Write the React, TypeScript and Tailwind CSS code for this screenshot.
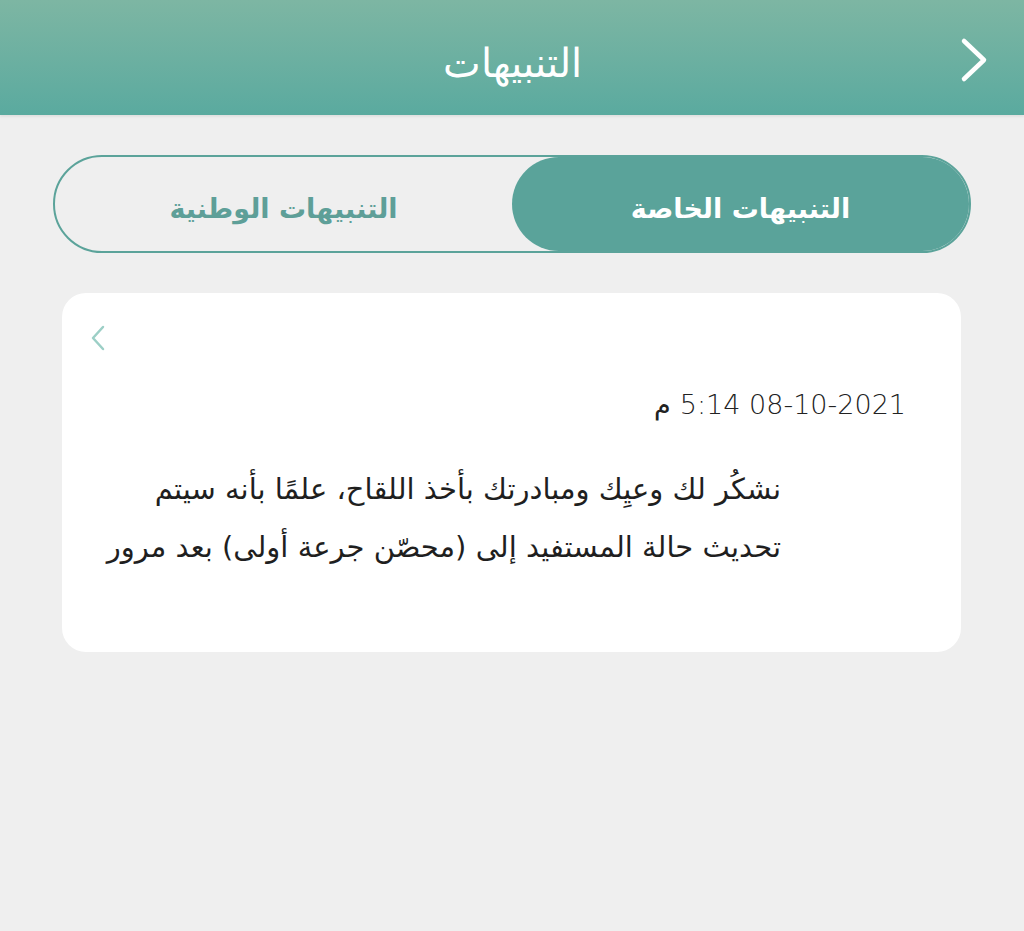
import React from 'react';

const arabicFont = { fontFamily: '"DejaVu Sans", "Noto Sans", sans-serif' };

function ChevronRight({ className }: { className?: string }) {
    return (
        <svg viewBox="0 0 28 46" className={className} fill="none">
            <path
                d="M4 4 L24 23 L4 42"
                stroke="currentColor"
                strokeWidth="4.5"
                strokeLinecap="round"
                strokeLinejoin="round"
            />
        </svg>
    );
}

function ChevronLeft({ className }: { className?: string }) {
    return (
        <svg viewBox="0 0 16 26" className={className} fill="none">
            <path
                d="M13 2 L3 13 L13 24"
                stroke="currentColor"
                strokeWidth="2.5"
                strokeLinecap="round"
                strokeLinejoin="round"
            />
        </svg>
    );
}

export default function App() {
    return (
        <div
            dir="rtl"
            className="min-h-[931px] w-full bg-[#efefef]"
            style={arabicFont}
        >
            <header className="relative flex h-[115px] items-center justify-center bg-gradient-to-b from-[#7db6a3] to-[#5aaa9f] shadow-[0_2px_2px_rgba(0,0,0,0.06)]">
                <button
                    type="button"
                    className="absolute right-[36px] top-[37px] text-white"
                    aria-label="رجوع"
                >
                    <ChevronRight className="h-[46px] w-[28px]" />
                </button>
                <h1 className="pt-[10px] text-[40px] font-extralight text-white">
                    التنبيهات
                </h1>
            </header>

            <div className="px-[53px] pt-[40px]">
                <div className="flex h-[98px] rounded-full border-2 border-[#5ba39a]">
                    <button
                        type="button"
                        className="flex flex-1 items-center justify-center rounded-full bg-[#5aa39a] pt-[10px] text-[27px] font-bold text-white"
                    >
                        التنبيهات الخاصة
                    </button>
                    <button
                        type="button"
                        className="flex flex-1 items-center justify-center pt-[10px] text-[27px] font-bold text-[#5e9f98]"
                    >
                        التنبيهات الوطنية
                    </button>
                </div>
            </div>

            <div className="pl-[62px] pr-[63px] pt-[40px]">
                <div className="h-[359px] rounded-[24px] bg-white pl-[28px] pr-[55px] pt-[32px]">
                    <div className="flex justify-end">
                        <ChevronLeft className="h-[26px] w-[16px] text-[#9ccfc6]" />
                    </div>
                    <div
                        dir="rtl"
                        className="mt-[34px] text-[27px] font-light text-[#222]"
                    >
                        08-10-2021 5:14 م
                    </div>
                    <p className="ml-[20px] mr-[125px] mt-[34px] whitespace-nowrap text-[29px] leading-[58px] text-[#1f1f1f]">
                        نشكُر لك وعيِك ومبادرتك بأخذ اللقاح، علمًا بأنه سيتم
                        <br />
                        تحديث حالة المستفيد إلى (محصّن جرعة أولى) بعد مرور
                    </p>
                </div>
            </div>
        </div>
    );
}
